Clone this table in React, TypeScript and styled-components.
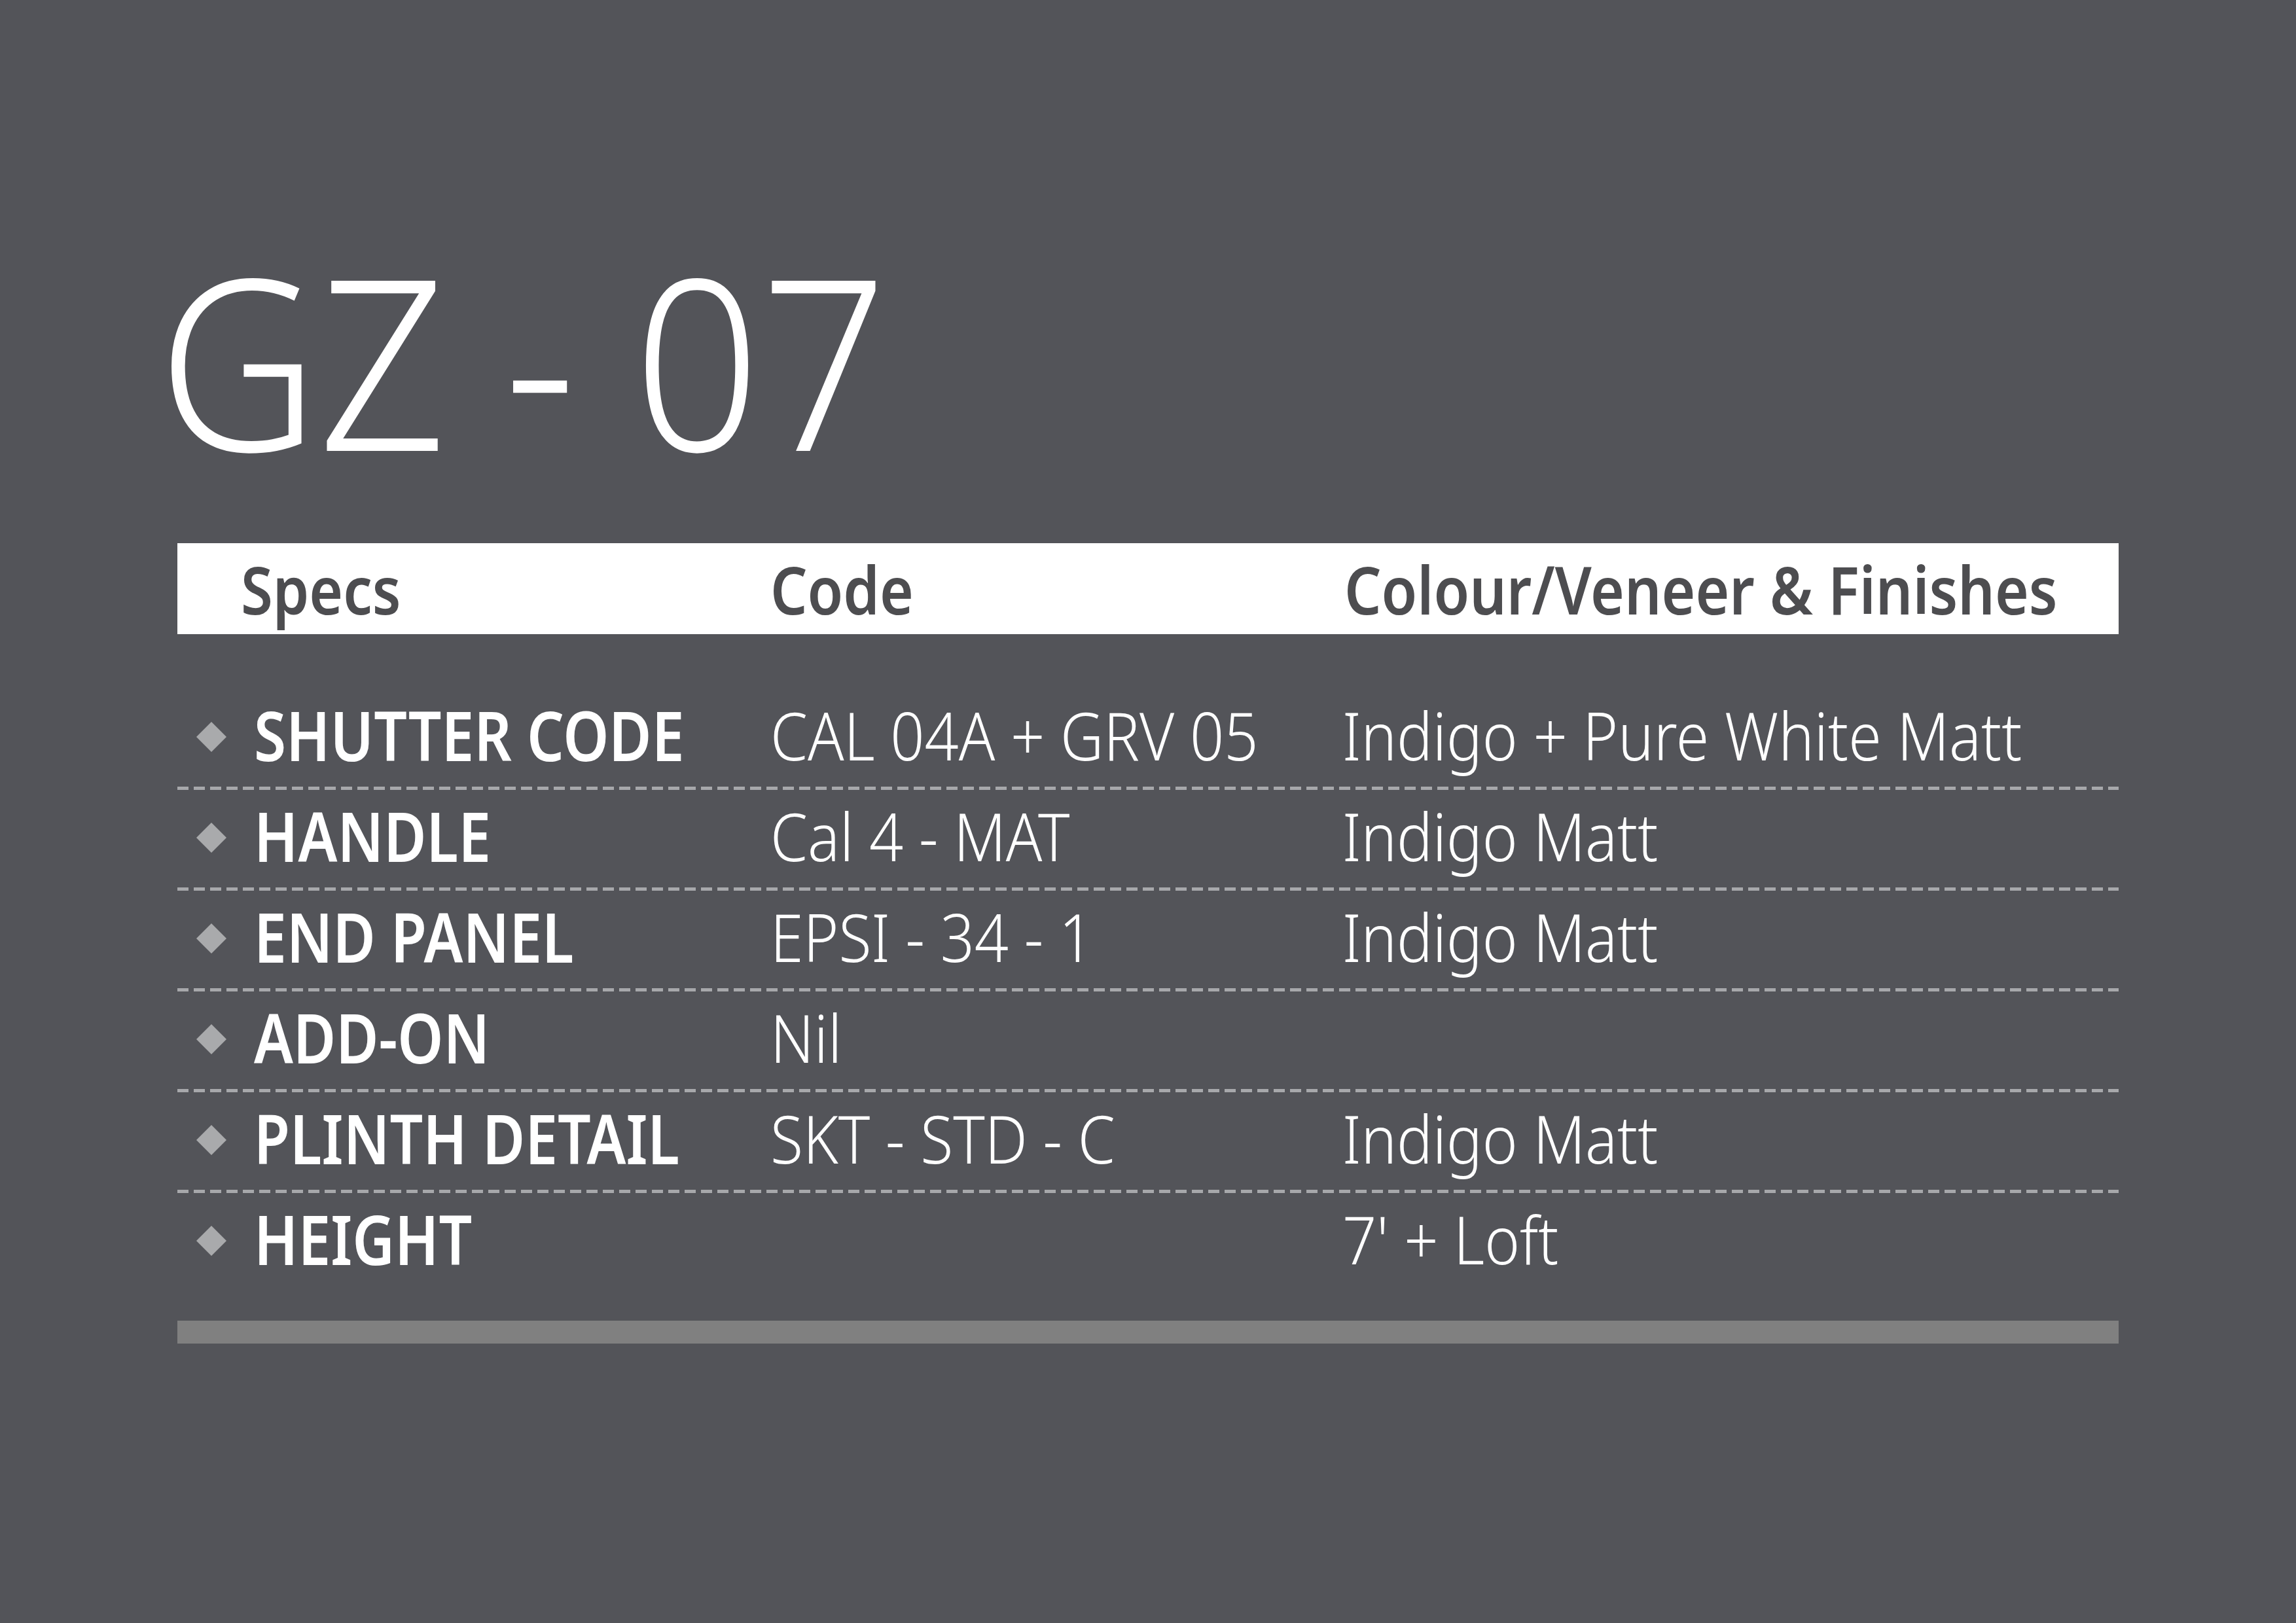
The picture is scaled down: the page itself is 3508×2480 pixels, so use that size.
import styled, { createGlobalStyle } from "styled-components";

const GlobalStyle = createGlobalStyle`
  html, body {
    margin: 0;
    padding: 0;
    background: #535459;
  }
`;

const FONT = `"Noto Sans", Roboto, "DejaVu Sans", sans-serif`;

const specs = [
    { label: "SHUTTER CODE", code: "CAL 04A + GRV 05", finish: "Indigo + Pure White Matt" },
    { label: "HANDLE", code: "Cal 4 - MAT", finish: "Indigo Matt" },
    { label: "END PANEL", code: "EPSI - 34 - 1", finish: "Indigo Matt" },
    { label: "ADD-ON", code: "Nil", finish: "" },
    { label: "PLINTH DETAIL", code: "SKT - STD - C", finish: "Indigo Matt" },
    { label: "HEIGHT", code: "", finish: "7' + Loft" },
];

const Diamond = () => (
    <Bullet viewBox="0 0 46 46" aria-hidden="true">
        <polygon points="23,0 46,23 23,46 0,23" fill="#a9aaac" />
    </Bullet>
);

const App = () => {
    return (
        <Page>
            <GlobalStyle />
            <Title>GZ - 07</Title>
            <HeaderBar>
                <HeaderCell>Specs</HeaderCell>
                <HeaderCell>Code</HeaderCell>
                <HeaderCell>Colour/Veneer &amp; Finishes</HeaderCell>
            </HeaderBar>
            <Rows>
                {specs.map((s) => (
                    <Row key={s.label}>
                        <Diamond />
                        <Label>{s.label}</Label>
                        <Value>{s.code}</Value>
                        <Value>{s.finish}</Value>
                    </Row>
                ))}
            </Rows>
            <BottomBar />
        </Page>
    );
};

export default App;

// the artwork uses a condensed face; Noto Sans is squeezed to the same widths
const Page = styled.div`
    width: 3508px;
    height: 2480px;
    box-sizing: border-box;
    padding: 366px 271px 0;
    background: #535459;
    font-family: ${FONT};
    overflow: hidden;
`;

const Title = styled.h1`
    margin: 0 0 0 -30px;
    height: 364px;
    font-size: 364px;
    line-height: 364px;
    font-weight: 300;
    color: #ffffff;
    white-space: nowrap;
    transform: scaleX(0.933);
    transform-origin: left center;
`;

const HeaderBar = styled.div`
    margin-top: 100px;
    height: 139px;
    box-sizing: border-box;
    padding-left: 97px;
    background: #ffffff;
    display: grid;
    grid-template-columns: 809px 877px 1fr;
    align-items: center;
`;

const HeaderCell = styled.div`
    font-size: 102px;
    line-height: 1;
    font-weight: 600;
    color: #4d4d50;
    white-space: nowrap;
    transform: scaleX(0.87);
    transform-origin: left center;
`;

const Rows = styled.div`
    margin-top: 84px;
`;

const Row = styled.div`
    height: 154px;
    box-sizing: border-box;
    padding: 20px 0 34px;
    display: grid;
    grid-template-columns: 117px 789px 874px 1fr;
    align-items: center;
    background-image: repeating-linear-gradient(
        90deg,
        #a7a8ab 0,
        #a7a8ab 17px,
        transparent 17px,
        transparent 25px
    );
    background-size: 100% 5px;
    background-repeat: no-repeat;
    background-position: left bottom;
    &:last-child {
        background-image: none;
    }
`;

const Bullet = styled.svg`
    width: 46px;
    height: 46px;
    margin: 6px 0 0 29px;
    display: block;
`;

const Label = styled.div`
    font-size: 105px;
    line-height: 100px;
    font-weight: 600;
    color: #ffffff;
    white-space: nowrap;
    transform: scaleX(0.85);
    transform-origin: left center;
`;

const Value = styled.div`
    font-size: 101px;
    line-height: 100px;
    font-weight: 300;
    color: #ffffff;
    white-space: nowrap;
    transform: scaleX(0.905);
    transform-origin: left center;
`;

const BottomBar = styled.div`
    margin-top: 41px;
    height: 35px;
    background: #808080;
`;
